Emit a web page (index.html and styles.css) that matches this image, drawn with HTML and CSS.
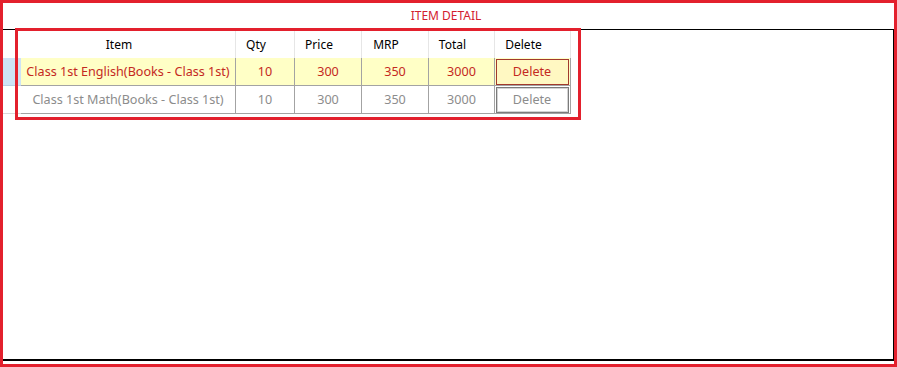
FILE: index.html
```html
<!DOCTYPE html>
<html>

<head>
    <meta charset="UTF-8">
    <title>Item Detail</title>
    <link rel="stylesheet" href="styles.css">
</head>

<body>
    <div class="frame">
        <div class="title">ITEM DETAIL</div>
        <div class="gridbox">
            <div class="grid">
                <!-- header -->
                <div class="rh"></div>
                <div class="hd">Item</div>
                <div class="hd">Qty</div>
                <div class="hd">Price</div>
                <div class="hd">MRP</div>
                <div class="hd">Total</div>
                <div class="hd">Delete</div>

                <!-- selected row -->
                <div class="rh rh-sel"></div>
                <div class="cell sel">Class 1st English(Books - Class 1st)</div>
                <div class="cell sel">10</div>
                <div class="cell sel">300</div>
                <div class="cell sel">350</div>
                <div class="cell sel">3000</div>
                <div class="cell sel"><span class="btn btn-sel">Delete</span></div>

                <!-- normal row -->
                <div class="rh rh-row"></div>
                <div class="cell">Class 1st Math(Books - Class 1st)</div>
                <div class="cell">10</div>
                <div class="cell">300</div>
                <div class="cell">350</div>
                <div class="cell">3000</div>
                <div class="cell"><span class="btn">Delete</span></div>
            </div>
        </div>
        <div class="mark"></div>
    </div>
</body>

</html>
```

FILE: styles.css
```css
* {
    margin: 0;
    padding: 0;
    box-sizing: border-box;
}

body {
    font-family: "Noto Sans", "Open Sans", sans-serif;
    font-size: 12px;
    background: #fff;
}

.frame {
    width: 897px;
    height: 367px;
    border: 3px solid #e3202d;
    position: relative;
}

.title {
    height: 26px;
    line-height: 26px;
    text-align: center;
    color: #d3202e;
    padding-right: 5px;
}

.gridbox {
    height: 332px;
    width: 891px;
    border-top: 1px solid #000;
    border-right: 1px solid #000;
    border-bottom: 2px solid #000;
}

.grid {
    display: grid;
    grid-template-columns: 18px 215px 59px 67px 67px 66px 76px;
    grid-template-rows: 28px 28px 28px;
}

.hd {
    display: flex;
    align-items: center;
    justify-content: center;
    color: #000;
    border-right: 1px solid #e6e6e6;
    padding-top: 1px;
    padding-right: 18px;
}

.rh-sel {
    background: #cde3f6;
    border-bottom: 1px solid #b9cfe3;
}

.rh-row {
    border-bottom: 1px solid #d9d9d9;
}

.cell {
    display: flex;
    align-items: center;
    justify-content: center;
    font-size: 12.6px;
    color: #8c8c8c;
    border-right: 1px solid #a3a3a3;
    border-bottom: 1px solid #a3a3a3;
    white-space: nowrap;
}

.sel {
    background: #ffffc6;
    color: #c4291f;
}

.btn {
    display: flex;
    align-items: center;
    justify-content: center;
    width: 73px;
    height: 26px;
    margin-right: 1px;
    border: 1px solid #7b7b7b;
    box-shadow: inset 0 0 0 1px #d4d4d4;
    background: #fff;
    color: #8c8c8c;
}

.btn-sel {
    border-color: #a23a2c;
    box-shadow: none;
    background: #fff8c2;
    color: #c4291f;
}

/* red outline drawn over the grid */
.mark {
    position: absolute;
    left: 12px;
    top: 25px;
    width: 566px;
    height: 92px;
    border: 3px solid #e3202d;
}
```
